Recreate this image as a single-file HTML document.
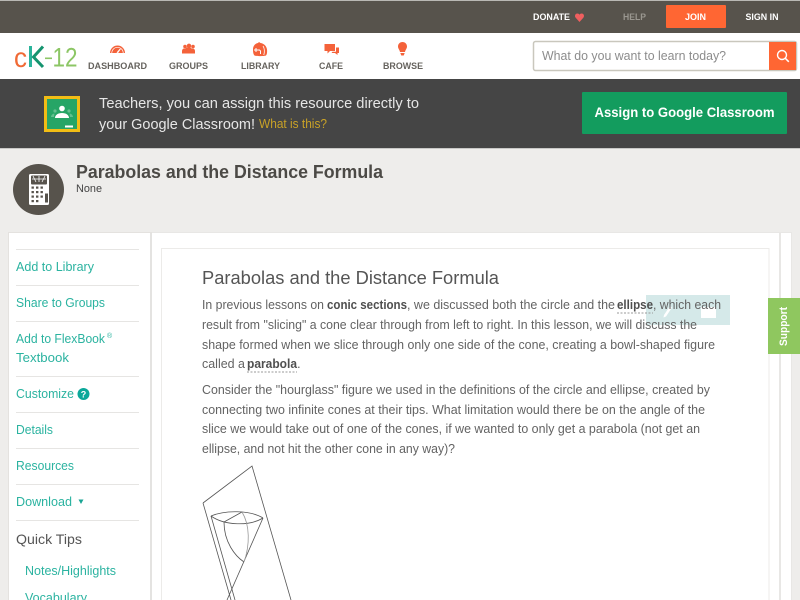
<!DOCTYPE html>
<html><head><meta charset="utf-8"><title>Parabolas and the Distance Formula</title>
<style>
html,body{margin:0;padding:0;width:800px;height:600px;overflow:hidden;background:#eeedeb}
svg{display:block;filter:blur(.3px)}
text{font-family:"Liberation Sans",sans-serif}
.nav{font-size:9px;font-weight:bold;fill:#66635e}
.top{font-size:9px;font-weight:bold;fill:#fff}
.side{font-size:13px;fill:#2bb3a0}
.body{font-size:13px;fill:#636363}
.b{font-weight:bold;fill:#4f4f4f}
</style></head><body>
<svg width="800" height="600" viewBox="0 0 800 600" xmlns="http://www.w3.org/2000/svg">
<rect width="800" height="600" fill="#eeedeb"/>
<!-- top bar -->
<rect width="800" height="33" fill="#57534c"/>
<rect width="800" height="1" fill="#b9b8b4"/>
<text class="top" x="533" y="20" textLength="37" lengthAdjust="spacingAndGlyphs">DONATE</text>
<path d="M579.500 22l-3.800-4.200c-1.500-1.800-.4-4.300 1.600-4.300.9 0 1.700.4 2.200 1.200.5-.8 1.300-1.200 2.200-1.200 2 0 3.100 2.500 1.600 4.300z" fill="#ef5f5f"/>
<text class="top" x="623" y="20" textLength="23" lengthAdjust="spacingAndGlyphs" style="fill:#9a9790">HELP</text>
<rect x="666" y="5" width="60" height="23" rx="1" fill="#ff6633"/>
<text class="top" x="685" y="20" textLength="21" lengthAdjust="spacingAndGlyphs">JOIN</text>
<text class="top" x="745.500" y="20" textLength="33" lengthAdjust="spacingAndGlyphs">SIGN IN</text>
<!-- header -->
<rect y="33" width="800" height="46" fill="#fff"/>
<!-- logo -->
<text x="14" y="67" fill="#f06a35" style="font-size:28px" textLength="13" lengthAdjust="spacingAndGlyphs">c</text>
<path d="M30.500 46v21" stroke="#2ab49b" stroke-width="3" fill="none"/>
<path d="M43 46.500L33.500 57 43 67" stroke="#15946f" stroke-width="3" fill="none"/>
<rect x="45" y="57.500" width="7" height="1.600" fill="#8cc665"/>
<text x="52.500" y="66.500" fill="#8cc665" style="font-size:27px" textLength="25" lengthAdjust="spacingAndGlyphs">12</text>
<!-- nav icons -->
<path d="M110 53a7.500 7.500 0 0 1 15 0z" fill="#f4623a"/>
<path d="M111.800 53a5.700 5.700 0 0 1 11.400 0" fill="none" stroke="#fff" stroke-width=".7"/>
<path d="M116.500 52.500l3.500-4 .8.600-2.800 4z" fill="#fff"/>
<path d="M182 53.500v-2.500c0-1.500 1-2.500 2-2.500h1.500c.3-.8 1-1 1.500-1h3c.5 0 1.200.2 1.500 1h1.500c1 0 2 1 2 2.500v2.500z" fill="#f4623a"/>
<circle cx="185" cy="46.500" r="1.800" fill="#f4623a"/><circle cx="189" cy="45.800" r="2.200" fill="#f4623a"/><circle cx="193" cy="46.500" r="1.800" fill="#f4623a"/>
<path d="M253 49.500c0-3.500 2-6 5-6.500l1-1 1.500 1c3.500.5 6 3 6.500 6.500.3 2.500 0 5-1 6-2 .8-10 .8-11.500 0-1.200-1.200-1.500-3.500-1.500-6z" fill="#f4623a"/>
<path d="M254 50h5.500l1 1v3M256 48l0 4" stroke="#fff" stroke-width="1" fill="none"/>
<path d="M263 46c1.500 2 1.800 6 .8 9" stroke="#fff" stroke-width=".8" fill="none"/>
<path d="M324.500 44h10.500v7h-5l-2.500 2.500V51h-3z" fill="#f4623a"/>
<path d="M336 47.500h3v5.500h-1.500v2l-2.500-2h-3.500l1-1.200h3.500z" fill="#f4623a"/>
<path d="M402.500 42c2.700 0 4.500 2 4.500 4.500 0 2-1.500 3-2 5.500h-5c-.5-2.500-2-3.500-2-5.500 0-2.500 1.800-4.500 4.500-4.500z" fill="#f4623a"/>
<path d="M400.300 53h4.400l-1 2.500h-2.400z" fill="#f4623a"/>
<text class="nav" x="88" y="69" textLength="59" lengthAdjust="spacingAndGlyphs">DASHBOARD</text>
<text class="nav" x="169" y="69" textLength="39" lengthAdjust="spacingAndGlyphs">GROUPS</text>
<text class="nav" x="241" y="69" textLength="39" lengthAdjust="spacingAndGlyphs">LIBRARY</text>
<text class="nav" x="319" y="69" textLength="24" lengthAdjust="spacingAndGlyphs">CAFE</text>
<text class="nav" x="383" y="69" textLength="40" lengthAdjust="spacingAndGlyphs">BROWSE</text>
<!-- search -->
<rect x="533.500" y="41.500" width="263" height="29" rx="2" fill="#fff" stroke="#c9c7bd" stroke-width="1.500"/>
<text x="542" y="60" style="font-size:13px;fill:#8c8c8c" textLength="184" lengthAdjust="spacingAndGlyphs">What do you want to learn today?</text>
<path d="M769 42h27v28h-27z" fill="#ff6633"/>
<circle cx="782" cy="55" r="4.500" stroke="#fff" stroke-width="1.400" fill="none"/>
<path d="M785.300 58.300l3.500 3.500" stroke="#fff" stroke-width="1.500"/>
<!-- banner -->
<rect y="79" width="800" height="69" fill="#454545"/>
<rect y="148" width="800" height="1" fill="#c8c8c6"/>
<rect x="44" y="96" width="36" height="36" fill="#f2bd15"/>
<rect x="47" y="99" width="30" height="30" fill="#26a566"/>
<circle cx="62" cy="108.500" r="2.800" fill="#fff"/>
<path d="M55 118c0-3 3-5 7-5s7 2 7 5z" fill="#fff"/>
<circle cx="55" cy="111" r="1.600" fill="#63c08f"/><circle cx="69" cy="111" r="1.600" fill="#63c08f"/>
<path d="M51 117c0-2 2-3.500 3.500-3.500L54 117zM73 117c0-2-2-3.500-3.500-3.500l.5 3.500z" fill="#63c08f"/>
<rect x="65" y="125.500" width="8" height="2" fill="#fff"/>
<text x="99" y="108" style="font-size:14.500px;fill:#e6e6e6" textLength="320" lengthAdjust="spacingAndGlyphs">Teachers, you can assign this resource directly to</text>
<text x="99" y="129" style="font-size:14.500px;fill:#e6e6e6" textLength="156" lengthAdjust="spacingAndGlyphs">your Google Classroom!</text>
<text x="259" y="128" style="font-size:12.500px;fill:#c9a227" textLength="68" lengthAdjust="spacingAndGlyphs">What is this?</text>
<rect x="582" y="92" width="205" height="42" rx="1" fill="#139c5e"/>
<text x="594.500" y="117" style="font-size:13.500px;font-weight:bold;fill:#fff" textLength="180" lengthAdjust="spacingAndGlyphs">Assign to Google Classroom</text>
<!-- title -->
<circle cx="38.500" cy="189.500" r="25.500" fill="#57534c"/>
<rect x="29" y="174" width="20" height="31" rx="1.500" fill="#fff"/>
<rect x="31" y="175.500" width="16" height="9" rx="1" fill="#57534c"/>
<path d="M33 176l3 6M39 176v6M45 176l-3 6M32 179h14" stroke="#fff" stroke-width=".8"/>
<g fill="#57534c"><rect x="31.500" y="186.500" width="2.400" height="2.200"/><rect x="36" y="186.500" width="2.400" height="2.200"/><rect x="40.500" y="186.500" width="2.400" height="2.200"/>
<rect x="31.500" y="191" width="2.400" height="2.200"/><rect x="36" y="191" width="2.400" height="2.200"/><rect x="40.500" y="191" width="2.400" height="2.200"/>
<rect x="31.500" y="195.500" width="2.400" height="2.200"/><rect x="36" y="195.500" width="2.400" height="2.200"/><rect x="40.500" y="195.500" width="2.400" height="2.200"/>
<rect x="31.500" y="200" width="2.400" height="2.200"/><rect x="36" y="200" width="2.400" height="2.200"/>
<rect x="45" y="193.500" width="3" height="9"/></g>
<text x="76" y="178" style="font-size:18px;font-weight:bold;fill:#4c4a46" textLength="307" lengthAdjust="spacingAndGlyphs">Parabolas and the Distance Formula</text>
<text x="76" y="192" style="font-size:11px;fill:#444" textLength="26" lengthAdjust="spacingAndGlyphs">None</text>
<!-- sidebar -->
<rect x="8" y="232" width="144" height="368" fill="#e4e2df"/>
<rect x="9" y="233" width="141" height="367" fill="#fff"/>
<rect x="150" y="233" width="2" height="367" fill="#e4e3e1"/>
<g fill="#e6e5e3">
<rect x="16" y="249" width="123" height="1"/><rect x="16" y="285" width="123" height="1"/><rect x="16" y="321" width="123" height="1"/><rect x="16" y="376" width="123" height="1"/><rect x="16" y="412" width="123" height="1"/><rect x="16" y="448" width="123" height="1"/><rect x="16" y="484" width="123" height="1"/><rect x="16" y="520" width="123" height="1"/>
</g>
<text class="side" x="16" y="271" textLength="78" lengthAdjust="spacingAndGlyphs">Add to Library</text>
<text class="side" x="16" y="307" textLength="89" lengthAdjust="spacingAndGlyphs">Share to Groups</text>
<text class="side" x="16" y="343" textLength="89" lengthAdjust="spacingAndGlyphs">Add to FlexBook</text>
<text class="side" x="107" y="338" style="font-size:7px">®</text>
<text class="side" x="16" y="362" textLength="53" lengthAdjust="spacingAndGlyphs">Textbook</text>
<text class="side" x="16" y="398" textLength="58" lengthAdjust="spacingAndGlyphs">Customize</text>
<circle cx="83.500" cy="394" r="6" fill="#0ba89a"/>
<text x="83.500" y="397.500" text-anchor="middle" style="font-size:9px;font-weight:bold;fill:#fff">?</text>
<text class="side" x="16" y="434" textLength="37" lengthAdjust="spacingAndGlyphs">Details</text>
<text class="side" x="16" y="470" textLength="58" lengthAdjust="spacingAndGlyphs">Resources</text>
<text class="side" x="16" y="506" textLength="56" lengthAdjust="spacingAndGlyphs">Download</text>
<path d="M78.500 499.500h5l-2.500 4.500z" fill="#1aa594"/>
<text x="16" y="544" style="font-size:14px;fill:#555" textLength="66" lengthAdjust="spacingAndGlyphs">Quick Tips</text>
<text class="side" x="25" y="575" textLength="91" lengthAdjust="spacingAndGlyphs">Notes/Highlights</text>
<text class="side" x="25" y="602" textLength="62" lengthAdjust="spacingAndGlyphs">Vocabulary</text>
<!-- main -->
<rect x="152" y="232" width="640" height="368" fill="#e8e7e5"/>
<rect x="152" y="233" width="639" height="367" fill="#fff"/>
<rect x="779" y="233" width="2" height="367" fill="#e8e7e5"/>
<rect x="161.500" y="248.500" width="607.500" height="360" fill="#fff" stroke="#ecebe9"/>
<text x="202" y="284" style="font-size:18px;fill:#555" textLength="297" lengthAdjust="spacingAndGlyphs">Parabolas and the Distance Formula</text>
<!-- highlight toolbar -->
<rect x="646" y="295" width="84" height="30" fill="#d5e9e9"/>
<path d="M664 315l6-9 2 1.500-6 9-2.500 1z" fill="#fff"/>
<rect x="701" y="307" width="15" height="11" fill="#fff"/>
<!-- paragraph 1 -->
<text class="body" x="202" y="309" textLength="122" lengthAdjust="spacingAndGlyphs">In previous lessons on</text>
<text class="body b" x="327" y="309" textLength="80" lengthAdjust="spacingAndGlyphs">conic sections</text>
<text class="body" x="407" y="309" textLength="208" lengthAdjust="spacingAndGlyphs">, we discussed both the circle and the</text>
<text class="body b" x="617" y="309" textLength="36" lengthAdjust="spacingAndGlyphs">ellipse</text>
<text class="body" x="653" y="309" textLength="68" lengthAdjust="spacingAndGlyphs">, which each</text>
<path d="M617 313h36" stroke="#9a9a9a" stroke-dasharray="2 1.500" stroke-width="1"/>
<text class="body" x="202" y="329" textLength="495" lengthAdjust="spacingAndGlyphs">result from "slicing" a cone clear through from left to right. In this lesson, we will discuss the</text>
<text class="body" x="202" y="349" textLength="513" lengthAdjust="spacingAndGlyphs">shape formed when we slice through only one side of the cone, creating a bowl-shaped figure</text>
<text class="body" x="202" y="368" textLength="43" lengthAdjust="spacingAndGlyphs">called a</text>
<text class="body b" x="247" y="368" textLength="50" lengthAdjust="spacingAndGlyphs">parabola</text>
<text class="body" x="297" y="368">.</text>
<path d="M247 372h50" stroke="#9a9a9a" stroke-dasharray="2 1.500" stroke-width="1"/>
<!-- paragraph 2 -->
<text class="body" x="202" y="394" textLength="508" lengthAdjust="spacingAndGlyphs">Consider the "hourglass" figure we used in the definitions of the circle and ellipse, created by</text>
<text class="body" x="202" y="414" textLength="503" lengthAdjust="spacingAndGlyphs">connecting two infinite cones at their tips. What limitation would there be on the angle of the</text>
<text class="body" x="202" y="433" textLength="498" lengthAdjust="spacingAndGlyphs">slice we would take out of one of the cones, if we wanted to only get a parabola (not get an</text>
<text class="body" x="202" y="453" textLength="253" lengthAdjust="spacingAndGlyphs">ellipse, and not hit the other cone in any way)?</text>
<!-- diagram -->
<g fill="none" stroke="#555" stroke-width=".8">
<path d="M203 503L252 466 291 600"/>
<path d="M203 503L231 600"/>
<path d="M211 516L235 600"/>
<path d="M211 516C225 510 250 510 263 518"/>
<path d="M211 516C225 526 250 526 263 518"/>
<path d="M263 518L227 600"/>
<path d="M224 522L242 512"/>
<path d="M224 522C224 542 235 556 244 562"/>
<path d="M242 512C250 525 250 545 244 562" stroke="#999"/>
</g>
<!-- support -->
<rect x="768" y="298" width="32" height="56" fill="#8fc75f"/>
<text x="0" y="0" transform="translate(787 346) rotate(-90)" style="font-size:11px;font-weight:bold;fill:#fff" textLength="39" lengthAdjust="spacingAndGlyphs">Support</text>
</svg>
</body></html>
